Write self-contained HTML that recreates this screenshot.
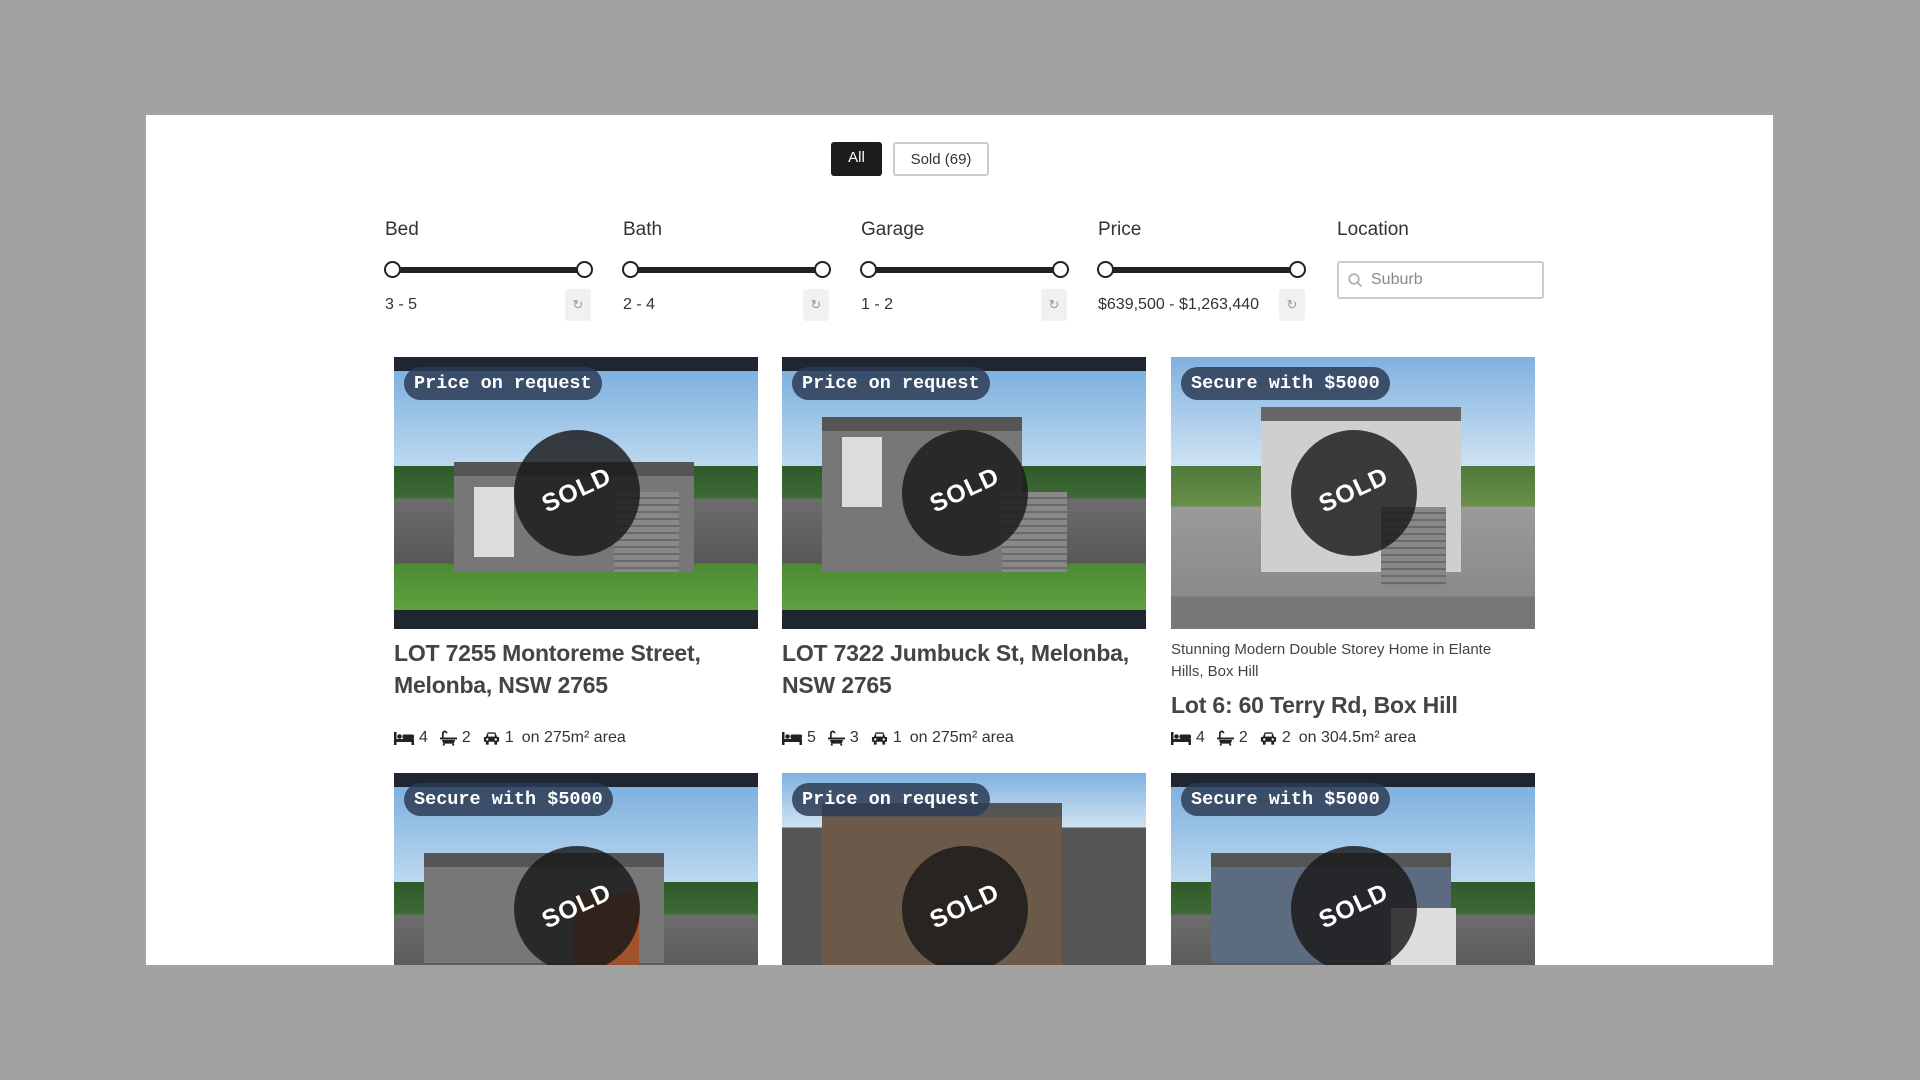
<!DOCTYPE html>
<html><head><meta charset="utf-8"><style>
*{box-sizing:border-box;margin:0;padding:0}
body{width:1920px;height:1080px;background:#a2a2a2;font-family:"Liberation Sans",sans-serif;position:relative;overflow:hidden;color:#333}
#panel{position:absolute;left:146px;top:115px;width:1627px;height:850px;background:#fff;overflow:hidden}
.abs{position:absolute}
.btn{position:absolute;top:27px;height:34px;border-radius:3px;font-size:15px;line-height:32px;text-align:center}
.lbl{position:absolute;top:104px;font-size:19px;color:#333}
.track{position:absolute;top:152px;height:6px;background:#222;border-radius:3px}
.thumb{position:absolute;top:146px;width:17px;height:17px;border:2.5px solid #222;background:#fff;border-radius:50%}
.val{position:absolute;top:181px;font-size:16px;color:#333}
.rst{position:absolute;top:174px;width:26px;height:32px;background:#f1f1f1;border-radius:3px;color:#999;font-size:13px;text-align:center;line-height:32px}
.card{position:absolute;width:364px}
.img{position:relative;width:364px;height:272px;overflow:hidden;background:linear-gradient(#1f2630 0 14px,#7fb1e0 14px,#bcd8ef 40%,#2e5a2a 40%,#3d6b34 52%,#6d6d6d 52%,#575757 76%,#4d8a35 76%,#5fa040 93%,#1f2630 93%)}
.img .house{position:absolute;left:60px;top:105px;width:240px;height:110px;background:#777;border-top:14px solid #555}
.img .door{position:absolute;left:220px;top:135px;width:65px;height:80px;background:repeating-linear-gradient(#888 0 5px,#6a6a6a 5px 7px)}
.img .win{position:absolute;left:80px;top:130px;width:40px;height:70px;background:#ddd}
.badge{position:absolute;left:10px;top:10px;height:33px;padding:0 10px;border-radius:17px;background:rgba(45,60,85,.85);color:#fff;font-family:"Liberation Mono",monospace;font-weight:bold;font-size:18.5px;line-height:33px}
.sold{position:absolute;left:120px;top:73px;width:126px;height:126px;border-radius:50%;background:rgba(25,25,25,.82)}
.sold span{position:absolute;left:0;right:0;top:46px;text-align:center;color:#fff;font-weight:bold;font-size:25px;transform:rotate(-25deg);letter-spacing:1px}
.title{font-size:23px;font-weight:bold;color:#444;line-height:32px;margin-top:8px;letter-spacing:-0.2px}
.meta{font-size:16px;color:#333;position:absolute;top:372px;left:0;white-space:nowrap;display:flex;align-items:center}
.meta svg{margin-right:5px}
.meta b{font-weight:normal;margin-right:12px}
.sub{font-size:15px;color:#444;line-height:22px;margin-top:10px;width:345px}
</style></head><body>
<svg width="0" height="0" style="position:absolute"><defs>
<symbol id="bed" viewBox="0 0 20 14"><rect x="0" y="1" width="2.5" height="13" fill="#222"/><rect x="0" y="8" width="20" height="3" fill="#222"/><rect x="17.5" y="8" width="2.5" height="6" fill="#222"/><circle cx="5.5" cy="5.5" r="2.3" fill="#222"/><rect x="8.5" y="3.5" width="11.5" height="4.5" rx="1.5" fill="#222"/></symbol>
<symbol id="bath" viewBox="0 0 18 16"><path d="M3 8V3a2 2 0 0 1 4 0" fill="none" stroke="#222" stroke-width="1.8"/><rect x="0" y="7.5" width="18" height="2" fill="#222"/><path d="M2 10h14l-1.5 4h-11z" fill="#222"/><rect x="3" y="14" width="2" height="2" fill="#222"/><rect x="13" y="14" width="2" height="2" fill="#222"/></symbol>
<symbol id="car" viewBox="0 0 18 14"><path d="M3 6l2-5h8l2 5h2v5h-2v3h-3v-3H6v3H3v-3H1V6z" fill="#222"/><rect x="5.5" y="2.5" width="7" height="3" fill="#fff"/><circle cx="4.5" cy="8.5" r="1.3" fill="#fff"/><circle cx="13.5" cy="8.5" r="1.3" fill="#fff"/></symbol>
</defs></svg>
<div id="panel">
<div class="btn" style="left:685px;width:51px;background:#1e1b1b;color:#fff">All</div>
<div class="btn" style="left:747px;width:96px;border:2px solid #ccc;color:#333">Sold (69)</div>

<div class="lbl" style="left:239px">Bed</div>
<div class="track" style="left:246px;width:192px"></div><div class="thumb" style="left:238px"></div><div class="thumb" style="left:430px"></div>
<div class="val" style="left:239px">3 - 5</div><div class="rst" style="left:419px">↻</div>

<div class="lbl" style="left:477px">Bath</div>
<div class="track" style="left:484px;width:192px"></div><div class="thumb" style="left:476px"></div><div class="thumb" style="left:668px"></div>
<div class="val" style="left:477px">2 - 4</div><div class="rst" style="left:657px">↻</div>

<div class="lbl" style="left:715px">Garage</div>
<div class="track" style="left:722px;width:192px"></div><div class="thumb" style="left:714px"></div><div class="thumb" style="left:906px"></div>
<div class="val" style="left:715px">1 - 2</div><div class="rst" style="left:895px">↻</div>

<div class="lbl" style="left:952px">Price</div>
<div class="track" style="left:959px;width:192px"></div><div class="thumb" style="left:951px"></div><div class="thumb" style="left:1143px"></div>
<div class="val" style="left:952px">$639,500 - $1,263,440</div><div class="rst" style="left:1133px">↻</div>

<div class="lbl" style="left:1191px">Location</div>
<div class="abs" style="left:1191px;top:146px;width:207px;height:38px;border:2px solid #ccc;border-radius:3px;font-size:16px;color:#888;line-height:34px;padding-left:32px">
<svg class="abs" style="left:9px;top:10px" width="15" height="15" viewBox="0 0 15 15"><circle cx="6" cy="6" r="4.8" fill="none" stroke="#aaa" stroke-width="1.6"/><path d="M9.5 9.5L13.5 13.5" stroke="#aaa" stroke-width="1.6"/></svg>Suburb</div>

<!-- row 1 -->
<div class="card" style="left:248px;top:242px">
<div class="img"><div class="house"></div><div class="win"></div><div class="door"></div><div class="badge">Price on request</div><div class="sold"><span>SOLD</span></div></div>
<div class="title">LOT 7255 Montoreme Street, Melonba, NSW 2765</div>
<div class="meta"><svg width="20" height="14"><use href="#bed"/></svg><b>4</b><svg width="17" height="16"><use href="#bath"/></svg><b>2</b><svg width="17" height="14"><use href="#car"/></svg><b style="margin-right:8px">1</b>on 275m² area</div>
</div>
<div class="card" style="left:636px;top:242px">
<div class="img"><div class="house" style="top:60px;height:155px;left:40px;width:200px"></div><div class="win" style="left:60px;top:80px"></div><div class="door"></div><div class="badge">Price on request</div><div class="sold"><span>SOLD</span></div></div>
<div class="title">LOT 7322 Jumbuck St, Melonba, NSW 2765</div>
<div class="meta"><svg width="20" height="14"><use href="#bed"/></svg><b>5</b><svg width="17" height="16"><use href="#bath"/></svg><b>3</b><svg width="17" height="14"><use href="#car"/></svg><b style="margin-right:8px">1</b>on 275m² area</div>
</div>
<div class="card" style="left:1025px;top:242px">
<div class="img" style="background:linear-gradient(#7fb1e0,#cfe3f2 40%,#4f7a3a 40%,#6a8f4a 55%,#9a9a9a 55%,#8a8a8a 88%,#777 88%)"><div class="house" style="top:50px;height:165px;left:90px;width:200px;background:#cfcfcf;border-top-color:#666"></div><div class="door" style="left:210px;top:150px"></div><div class="badge">Secure with $5000</div><div class="sold"><span>SOLD</span></div></div>
<div class="sub">Stunning Modern Double Storey Home in Elante Hills, Box Hill</div>
<div class="title" style="margin-top:6px">Lot 6: 60 Terry Rd, Box Hill</div>
<div class="meta"><svg width="20" height="14"><use href="#bed"/></svg><b>4</b><svg width="17" height="16"><use href="#bath"/></svg><b>2</b><svg width="17" height="14"><use href="#car"/></svg><b style="margin-right:8px">2</b>on 304.5m² area</div>
</div>

<!-- row 2 -->
<div class="card" style="left:248px;top:658px">
<div class="img"><div class="house" style="left:30px;top:80px"></div><div class="door" style="background:#a0522d;left:180px;top:120px"></div><div class="badge">Secure with $5000</div><div class="sold"><span>SOLD</span></div></div>
</div>
<div class="card" style="left:636px;top:658px">
<div class="img" style="background:linear-gradient(#7fb1e0,#cfe3f2 20%,#555 20%)"><div class="house" style="left:40px;top:30px;height:180px;background:#6b5a4a"></div><div class="badge">Price on request</div><div class="sold"><span>SOLD</span></div></div>
</div>
<div class="card" style="left:1025px;top:658px">
<div class="img"><div class="house" style="left:40px;top:80px;background:#5d6b80"></div><div class="door" style="background:#ddd"></div><div class="badge">Secure with $5000</div><div class="sold"><span>SOLD</span></div></div>
</div>
</div>
</body></html>
